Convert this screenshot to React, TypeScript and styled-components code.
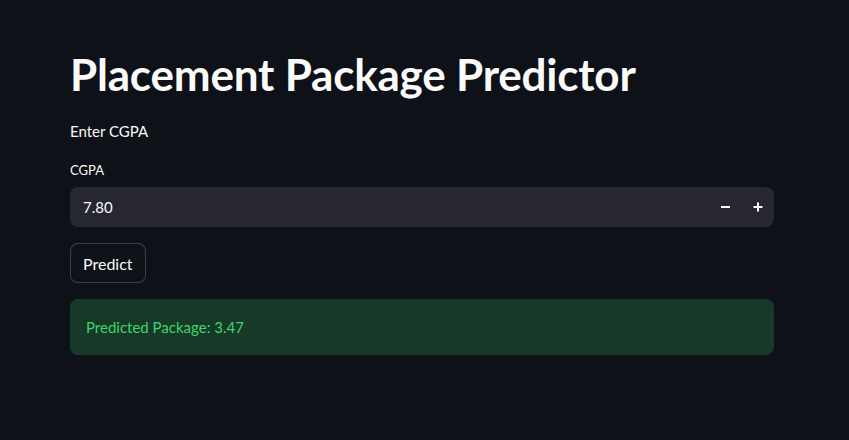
import React from "react";
import styled, { createGlobalStyle } from "styled-components";

const Global = createGlobalStyle`
  html, body { margin: 0; padding: 0; background: #0e1117; }
  body { font-family: "Source Sans Pro", "Lato", "Noto Sans", sans-serif; color: #fafafa; }
  * { box-sizing: border-box; }
`;

const Page = styled.div`
  width: 849px;
  height: 440px;
  background: #0e1117;
  padding: 48px 75px 0 70px;
`;

const Title = styled.h1`
  margin: 0;
  font-size: 44px;
  line-height: 53px;
  font-weight: 700;
  letter-spacing: -0.2px;
`;

const Text = styled.p`
  margin: 18px 0 0;
  font-size: 15px;
  line-height: 24px;
`;

const Label = styled.label`
  display: block;
  margin: 17px 0 0;
  font-size: 13px;
  line-height: 21px;
`;

const InputRow = styled.div`
  margin-top: 6px;
  height: 40px;
  background: #262730;
  border-radius: 8px;
  display: flex;
  align-items: center;
  padding-left: 13px;
`;

const Value = styled.span`
  flex: 1;
  font-size: 15px;
`;

const Step = styled.button`
  width: 32px;
  height: 40px;
  background: transparent;
  border: none;
  color: #fafafa;
  display: flex;
  align-items: center;
  justify-content: center;
  padding: 0;
`;

const Button = styled.button`
  margin-top: 16px;
  height: 40px;
  padding: 0 12px;
  background: #0e1117;
  border: 1px solid rgba(250, 250, 250, 0.2);
  border-radius: 8px;
  color: #fafafa;
  font-family: inherit;
  font-size: 16px;
  display: block;
`;

const Alert = styled.div`
  margin-top: 16px;
  height: 56px;
  background: #173928;
  border-radius: 8px;
  color: #3dd56d;
  font-size: 15px;
  display: flex;
  align-items: center;
  padding-left: 16px;
`;

const Minus = () => (
  <svg width="10" height="10" viewBox="0 0 10 10">
    <rect x="0" y="4" width="9" height="2" fill="#fafafa" />
  </svg>
);
const Plus = () => (
  <svg width="10" height="10" viewBox="0 0 10 10">
    <rect x="0.5" y="4" width="9" height="2" fill="#fafafa" />
    <rect x="4" y="0.5" width="2" height="9" fill="#fafafa" />
  </svg>
);

export default function App() {
  return (
    <>
      <Global />
      <Page>
        <Title>Placement Package Predictor</Title>
        <Text>Enter CGPA</Text>
        <Label>CGPA</Label>
        <InputRow>
          <Value>7.80</Value>
          <Step><Minus /></Step>
          <Step><Plus /></Step>
        </InputRow>
        <Button>Predict</Button>
        <Alert>Predicted Package: 3.47</Alert>
      </Page>
    </>
  );
}
